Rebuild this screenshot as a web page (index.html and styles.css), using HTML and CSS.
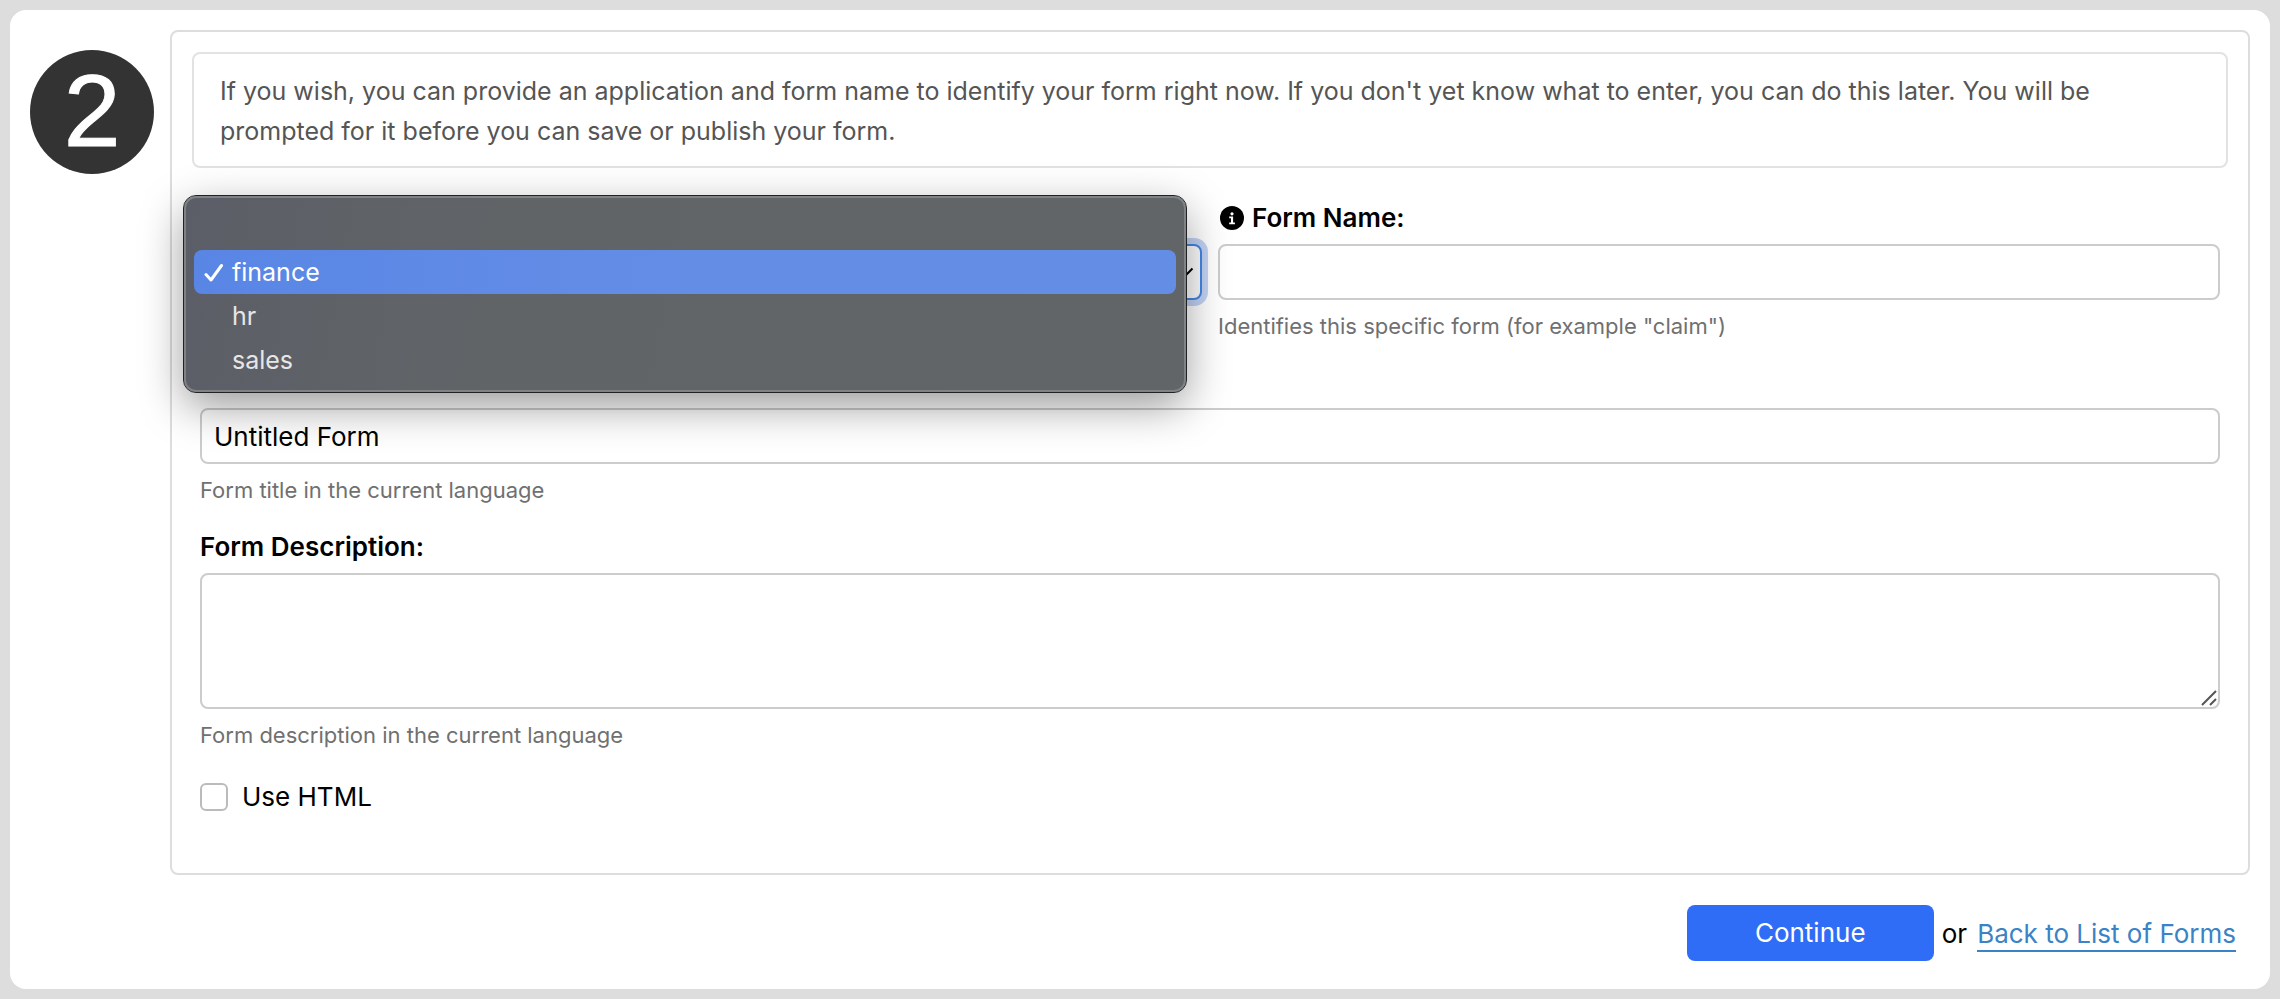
FILE: index.html
```html
<!DOCTYPE html>
<html lang="en">
<head>
<meta charset="utf-8">
<title>New Form</title>
<link rel="stylesheet" href="styles.css">
</head>
<body>
<main class="card">
  <form>
    <div class="step">
      <div class="step-number">2</div>
      <section class="panel">
        <p class="info">If you wish, you can provide an application and form name to identify your form right now. If you don't yet know what to enter, you can do this later. You will be prompted for it before you can save or publish your form.</p>
        <div class="fields">
          <div class="columns">
            <div class="select-wrap">
              <select class="control select" aria-label="Application name">
                <option></option>
                <option selected>finance</option>
                <option>hr</option>
                <option>sales</option>
              </select>
              <svg class="chevron" viewBox="0 0 16 10" aria-hidden="true"><path d="M1.500 1.500L8 8L14.500 1.500"/></svg>
              <ul class="menu" role="listbox" aria-label="Application name">
                <li class="menu-item" role="option" aria-label="None"></li>
                <li class="menu-item selected" role="option" aria-selected="true"><svg class="check" viewBox="0 0 20 20" aria-hidden="true"><path d="M2 11.500L7 17L17.500 2.500"/></svg>finance</li>
                <li class="menu-item" role="option">hr</li>
                <li class="menu-item" role="option">sales</li>
              </ul>
            </div>
            <div class="field">
              <label class="label" for="form-name">
                <svg class="info-icon" viewBox="0 0 24 24" aria-hidden="true"><circle cx="12" cy="12" r="12"/><circle class="mark" cx="12" cy="7.800" r="1.600"/><path class="mark" d="M9.200 10.600H13.100V16.600H14.900V18.200H9.200V16.600H11V12.200H9.200Z"/></svg>
                Form Name:
              </label>
              <input class="control" id="form-name" type="text">
              <div class="hint">Identifies this specific form (for example "claim")</div>
            </div>
          </div>
          <div class="field title-field">
            <input class="control" type="text" aria-label="Form title" value="Untitled Form">
            <div class="hint">Form title in the current language</div>
          </div>
          <div class="field">
            <label class="label" for="form-description">Form Description:</label>
            <div class="area-wrap">
              <textarea class="control area" id="form-description"></textarea>
              <svg class="grip" viewBox="0 0 16 16" aria-hidden="true"><path d="M1 15L15 1M9 15L15 9"/></svg>
            </div>
            <div class="hint">Form description in the current language</div>
          </div>
          <label class="checkbox-row"><input class="checkbox" type="checkbox">Use HTML</label>
        </div>
      </section>
    </div>
    <div class="actions">
      <button class="continue" type="button">Continue</button>
      <span class="or">or</span>
      <a class="back" href="#">Back to List of Forms</a>
    </div>
  </form>
</main>
</body>
</html>
```
FILE: styles.css
```css
* {
  box-sizing: border-box;
}

body {
  margin: 0;
  padding: 10px;
  background: #ddd;
  color: #000;
  font-family: Inter, "Liberation Sans", sans-serif;
  font-size: 26px;
  line-height: 32px;
}

.card {
  padding: 20px 20px 28px;
  border-radius: 16px;
  background: #fff;
}

.step {
  display: flex;
  align-items: flex-start;
  gap: 16px;
}

.step-number {
  flex: none;
  width: 124px;
  height: 124px;
  margin-top: 20px;
  border-radius: 50%;
  background: #333;
  color: #fff;
  font-family: "Liberation Sans", sans-serif;
  font-size: 102px;
  line-height: 122px;
  text-align: center;
  -webkit-text-stroke: 1px #fff;
}

.panel {
  flex: 1;
  padding: 20px 20px 60px;
  border: 2px solid #ddd;
  border-radius: 8px;
}

.info {
  margin: 0;
  padding: 17px 26px 15px;
  border: 2px solid #e2e2e2;
  border-radius: 8px;
  color: #555;
  font-size: 25px;
  line-height: 40px;
}

.fields {
  display: flex;
  flex-direction: column;
  gap: 25px;
  padding: 34px 8px 0;
}

.columns {
  display: grid;
  grid-template-columns: 1fr 1fr;
  gap: 16px;
}

.label {
  display: flex;
  align-items: center;
  gap: 8px;
  margin-bottom: 10px;
  font-weight: 600;
}

.info-icon {
  width: 24px;
  height: 24px;
  margin-left: 2px;
}

.mark {
  fill: #fff;
}

.control {
  display: block;
  width: 100%;
  height: 56px;
  padding: 0 12px;
  border: 2px solid #ccc;
  border-radius: 8px;
  outline: none;
  background: transparent;
  color: #000;
  font: inherit;
}

.title-field {
  padding-top: 41px;
}

.select-wrap {
  position: relative;
  padding-top: 42px;
}

.select {
  appearance: none;
  border-color: #4387e8;
  box-shadow: 0 0 0 6px #c3d3f5;
  background: #fff;
}

.chevron {
  position: absolute;
  right: 8px;
  top: 65px;
  width: 16px;
  height: 10px;
  fill: none;
  stroke: #000;
  stroke-width: 2;
}

.menu {
  position: absolute;
  top: -6px;
  left: -16px;
  right: 16px;
  margin: 0;
  padding: 8px;
  border: 2px solid #808386;
  border-radius: 12px;
  outline: 1px solid #222;
  background: linear-gradient(100deg, #5b5e66, #616467 30%, #626568);
  box-shadow: 0 14px 44px rgba(0, 0, 0, 0.4);
  color: #e6e6e6;
  font-size: 25px;
  list-style: none;
}

.menu-item {
  position: relative;
  height: 44px;
  padding-left: 38px;
  border-radius: 8px;
  line-height: 44px;
}

.selected {
  background: linear-gradient(90deg, #5986e5, #648de6 50%);
  color: #fff;
}

.check {
  position: absolute;
  left: 10px;
  top: 13px;
  width: 20px;
  height: 20px;
  fill: none;
  stroke: #fff;
  stroke-width: 3;
  stroke-linecap: round;
  stroke-linejoin: round;
}

.hint {
  margin-top: 10px;
  color: #707070;
  font-size: 22px;
}

.area-wrap {
  position: relative;
}

.area {
  height: 136px;
  padding: 12px;
  resize: none;
}

.grip {
  position: absolute;
  right: 3px;
  bottom: 3px;
  width: 16px;
  height: 16px;
  fill: none;
  stroke: #555;
  stroke-width: 2;
}

.checkbox-row {
  display: flex;
  align-items: center;
  gap: 14px;
  margin-top: 5px;
}

.checkbox {
  appearance: none;
  width: 28px;
  height: 28px;
  margin: 0;
  border: 2px solid #bbb;
  border-radius: 6px;
  background: #fff;
}

.actions {
  display: flex;
  align-items: center;
  justify-content: flex-end;
  margin-top: 30px;
  padding-right: 14px;
}

.continue {
  width: 247px;
  height: 56px;
  margin-right: 8px;
  border: 0;
  border-radius: 8px;
  background: #306df6;
  color: #fff;
  font: inherit;
}

.or {
  padding-top: 2px;
}

.back {
  margin-left: 10px;
  padding-top: 4px;
  border-bottom: 2px solid #3983c6;
  color: #3983c6;
  text-decoration: none;
}
```
